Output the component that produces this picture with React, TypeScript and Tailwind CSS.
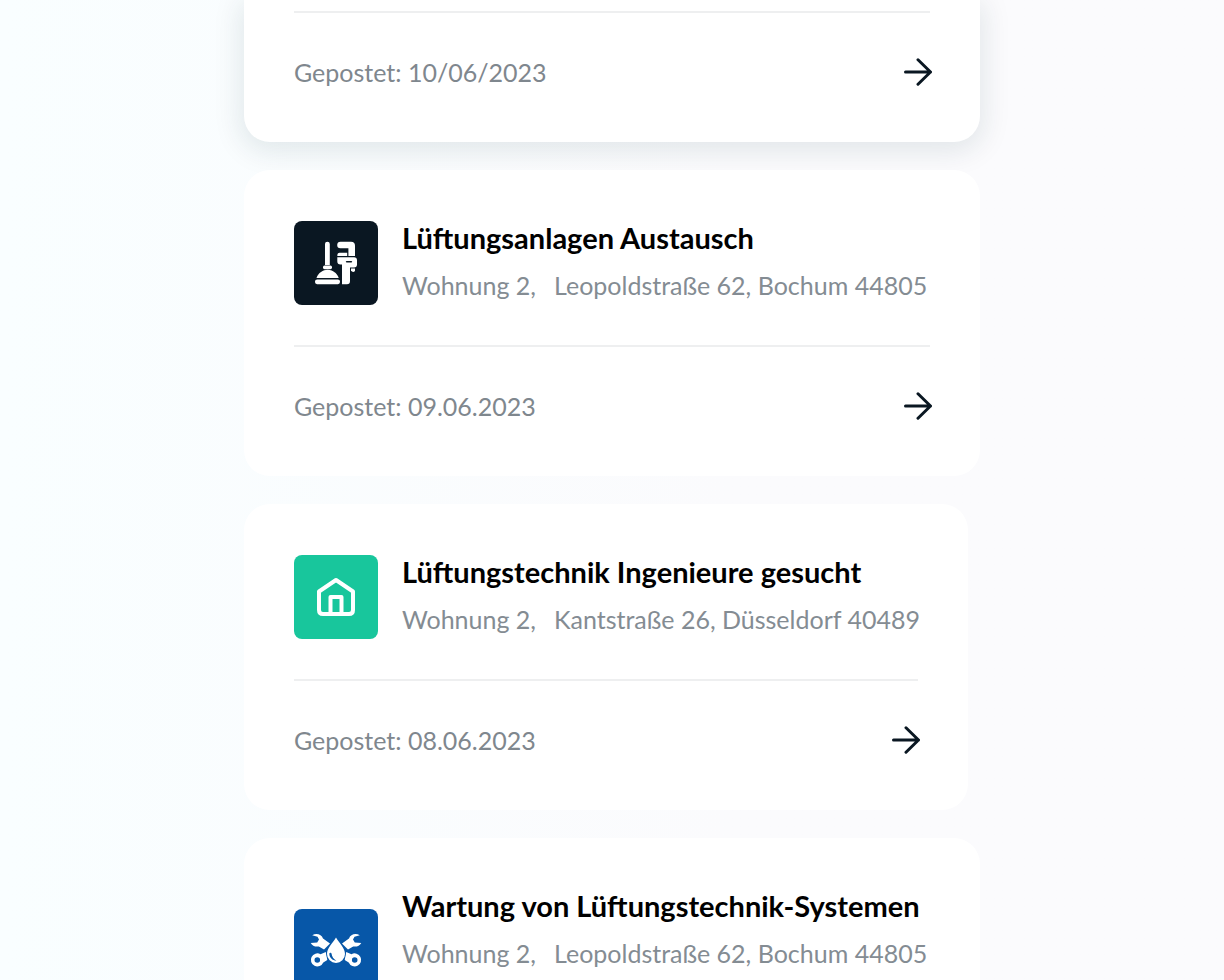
import type { ReactNode } from "react";
import clsx from "clsx";

interface Job {
  title?: string;
  unit?: string;
  address?: string;
  posted: string;
  icon?: ReactNode;
  tile?: string;
  width: string;
  raised?: boolean;
}

function ArrowIcon() {
  return (
    <svg viewBox="0 0 28 28" className="h-7 w-7" fill="none" stroke="#0a1722" strokeWidth="3" strokeLinecap="round" strokeLinejoin="round" aria-hidden="true">
      <path d="M1.5 14H26.5M14 1.800 26.500 14 14 26.200" />
    </svg>
  );
}

function PlumbingIcon() {
  return (
    <svg viewBox="0 0 84 84" className="h-full w-full" fill="#fff" aria-hidden="true">
      {/* plunger */}
      <path d="M31 44V23q0-2.300 2.400-2.300T35.800 23V44Z" />
      <rect x="29" y="44.600" width="9" height="3.600" rx="1.600" />
      <path d="M22.500 57C24.300 51.800 29 48.800 33.600 48.800s9.300 3 11.100 8.200Z" />
      <rect x="21" y="58.500" width="25" height="4.700" rx="2.100" />
      {/* pipe wrench */}
      <path d="M46.500 20.700H57q4 0 4 4v10.300h-6.600v-7.800h-8q-3.200 0-3.200-3.200t3.300-3.300Z" />
      <path d="M45.500 31.800h7.700V35H43.300q0-3.200 2.200-3.200Z" />
      <path fillRule="evenodd" d="M43.300 36.300H60q3 0 3 3v4.200q0 3-3 3h-4V60q0 3.200-3 3.200h-5V43.500h-1.500q-3.200 0-3.200-3.200Zm9.500 3.600q-1 0-1 .8t1 .8h4.400q1 0 1-.8t-1-.8Z" />
      <path d="M57 47.500h4v1.800q0 1.700-1.700 1.700T57 49.300Z" />
    </svg>
  );
}

function HomeIcon() {
  return (
    <svg viewBox="0 0 84 84" className="h-full w-full" fill="none" stroke="#fff" strokeWidth="4" strokeLinejoin="round" aria-hidden="true">
      <path d="M42 25 25 36.500V55q0 4 4 4h26q4 0 4-4V36.500Z" />
      <path d="M36.500 59V42h11v17" />
    </svg>
  );
}

function WrenchDropIcon() {
  return (
    <svg viewBox="0 0 84 84" className="h-full w-full" fill="#fff" aria-hidden="true">
      <path d="M18.200 26.200c4.400-2.400 9.400-.8 10.800 3.400l7 5-6 6-5.200-3.200c-3.400.6-6.600-.6-8.100-3.500l6.500-.3 1.800-3.200-1.500-2.700Z" />
      <path d="M65.800 26.200c-4.400-2.400-9.400-.8-10.800 3.400l-7 5 6 6 5.200-3.200c3.400.6 6.600-.6 8.100-3.500l-6.500-.3-1.800-3.200 1.500-2.700Z" />
      <path fillRule="evenodd" d="M31.800 43 26.500 45.200a6.500 6.500 0 1 0 2.800 8.300l4-2.500Zm-8.500 5.200a2.800 2.800 0 1 1 0 5.600 2.800 2.800 0 0 1 0-5.600Z" />
      <path fillRule="evenodd" d="m52.200 43 5.300 2.200a6.500 6.500 0 1 1-2.800 8.300l-4-2.500Zm8.500 5.200a2.800 2.800 0 1 0 0 5.600 2.800 2.800 0 0 0 0-5.600Z" />
      <path fillRule="evenodd" stroke="#0757a8" strokeWidth="1.200" paintOrder="stroke" d="M42 28.500c3.500 6 9 10.600 9 16.500a9 9 0 0 1-18 0c0-5.900 5.500-10.500 9-16.500Zm-6.700 16.300c0 3.800 3.100 6.700 7.100 6.900-3-1.700-4.400-3.700-4.900-7.200-.3-1.200-2-1-2.200.3Z" />
    </svg>
  );
}

const jobs: Job[] = [
  { posted: "10/06/2023", width: "w-[736px]", raised: true },
  {
    title: "Lüftungsanlagen Austausch",
    unit: "Wohnung 2,",
    address: "Leopoldstraße 62, Bochum 44805",
    posted: "09.06.2023",
    icon: <PlumbingIcon />,
    tile: "bg-[#0a1722]",
    width: "w-[736px]",
  },
  {
    title: "Lüftungstechnik Ingenieure gesucht",
    unit: "Wohnung 2,",
    address: "Kantstraße 26, Düsseldorf 40489",
    posted: "08.06.2023",
    icon: <HomeIcon />,
    tile: "bg-[#18c69c]",
    width: "w-[724px]",
  },
  {
    title: "Wartung von Lüftungstechnik-Systemen",
    unit: "Wohnung 2,",
    address: "Leopoldstraße 62, Bochum 44805",
    posted: "07.06.2023",
    icon: <WrenchDropIcon />,
    tile: "bg-[#0757a8] mt-5",
    width: "w-[736px]",
  },
];

function JobCard({ job }: { job: Job }) {
  return (
    <article
      className={clsx(
        "max-w-full bg-white px-[50px] pb-[50px]",
        job.width,
        job.raised ? "rounded-b-[26px] pt-[11px] shadow-[0_6px_28px_4px_rgba(10,50,55,0.10)]" : "rounded-[26px] pt-[51px]",
      )}
    >
      {job.title && (
        <div className="flex items-start gap-6 pb-10">
          <div className={clsx("h-[84px] w-[84px] shrink-0 overflow-hidden rounded-lg", job.tile)}>{job.icon}</div>
          <div className="whitespace-nowrap">
            <h2 className="text-[29px] leading-[34px] font-bold text-black">{job.title}</h2>
            <p className="mt-[14px] flex gap-[18px] text-[25px] leading-8 text-[#848c93]">
              <span>{job.unit}</span>
              <span>{job.address}</span>
            </p>
          </div>
        </div>
      )}
      <div className="flex items-center justify-between border-t-2 border-[#eeeff0] pt-[39px]">
        <p className="text-[25px] leading-[38px] text-[#7f878e]">Gepostet: {job.posted}</p>
        <a href="#" aria-label="Auftrag öffnen" className="-mr-0.5 flex h-10 items-center">
          <ArrowIcon />
        </a>
      </div>
    </article>
  );
}

export default function App() {
  return (
    <main className="h-screen overflow-hidden bg-linear-to-r from-[#f9feff] to-[#fbfbfd] to-60% font-[Lato,sans-serif]">
      <div className="mx-auto flex max-w-[736px] flex-col gap-7">
        {jobs.map((job) => (
          <JobCard key={job.posted} job={job} />
        ))}
      </div>
    </main>
  );
}
